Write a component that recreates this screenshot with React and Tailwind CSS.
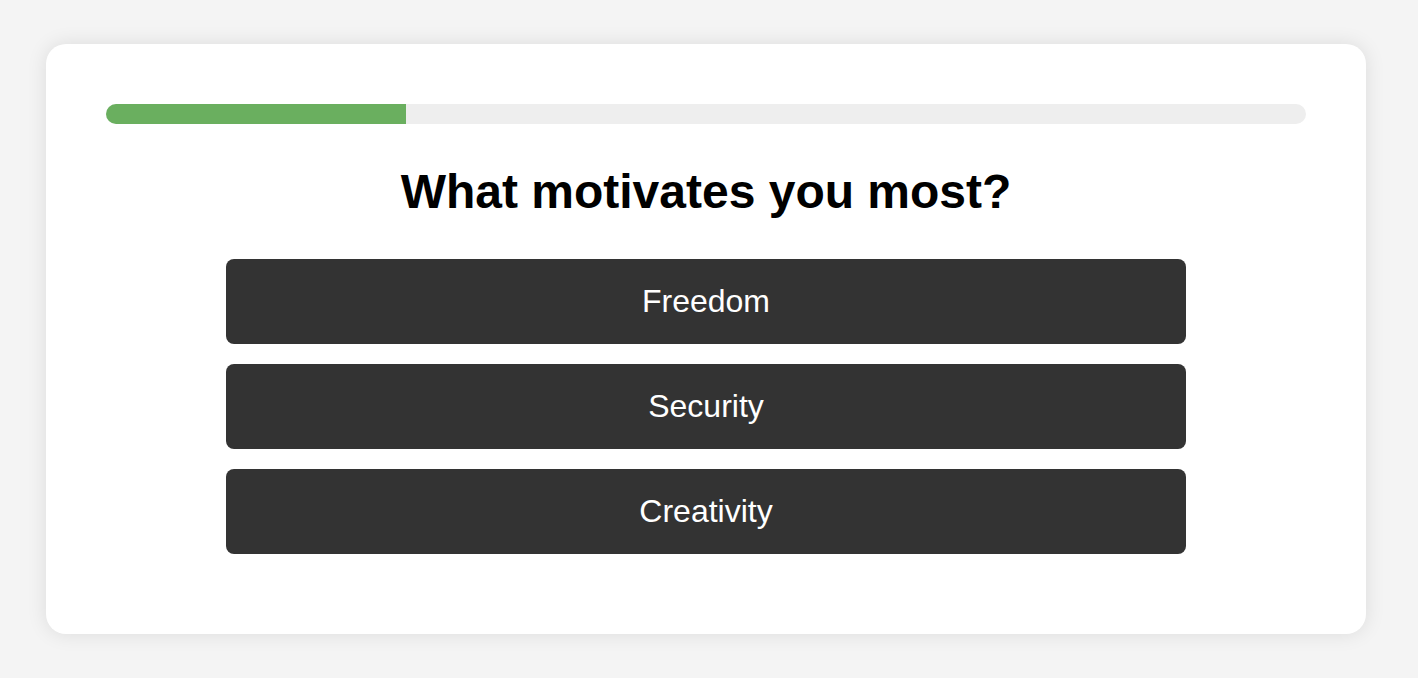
export default function App() {
  const options = ["Freedom", "Security", "Creativity"];
  return (
    <div
      className="min-h-[678px] w-full bg-[#f4f4f4] pt-[44px] pl-[46px] pb-[44px]"
      style={{ fontFamily: '"Liberation Sans", Arial, sans-serif' }}
    >
      <div className="w-[1320px] rounded-[20px] bg-white p-[60px] shadow-[0_0_20px_rgba(0,0,0,0.1)]">
        <div className="mb-10 h-5 w-full overflow-hidden rounded-full bg-[#eeeeee]">
          <div className="h-full w-1/4 bg-[#6aaf5f]" />
        </div>
        <h1 className="mb-10 text-center text-[48px] font-bold leading-[55px] text-black">
          What motivates you most?
        </h1>
        <div className="mx-auto flex w-[960px] flex-col gap-5 pb-5">
          {options.map((o) => (
            <button
              key={o}
              className="w-full rounded-lg bg-[#333333] py-6 text-center text-[32px] leading-[37px] text-white"
            >
              {o}
            </button>
          ))}
        </div>
      </div>
    </div>
  );
}
